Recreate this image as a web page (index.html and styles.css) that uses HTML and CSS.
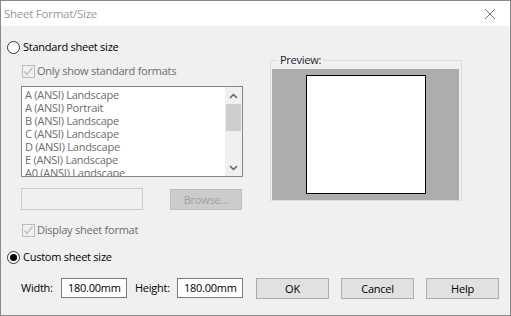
FILE: index.html
```html
<!DOCTYPE html>
<html lang="en">
<head>
    <meta charset="UTF-8">
    <title>Sheet Format/Size</title>
    <link rel="stylesheet" href="styles.css">
</head>
<body>
    <div class="dialog">
        <!-- title bar -->
        <div class="titlebar">
            <span class="title">Sheet Format/Size</span>
            <svg class="close" width="12" height="12" viewBox="0 0 12 12">
                <path d="M1 1 L11 11 M11 1 L1 11" stroke="#777" stroke-width="1" fill="none"/>
            </svg>
        </div>

        <div class="content">
            <div class="top">
                <!-- left column -->
                <div class="left">
                    <div class="row radio-row">
                        <span class="radio"></span>Standard sheet size
                    </div>
                    <div class="row check-row disabled">
                        <span class="check">
                            <svg width="11" height="11" viewBox="0 0 11 11"><path d="M1.5 5.5 L4 8.5 L9.5 1.5" stroke="#bcbcbc" stroke-width="1.3" fill="none"/></svg>
                        </span>Only show standard formats
                    </div>
                    <div class="listbox">
                        <ul class="items">
                            <li>A (ANSI) Landscape</li>
                            <li>A (ANSI) Portrait</li>
                            <li>B (ANSI) Landscape</li>
                            <li>C (ANSI) Landscape</li>
                            <li>D (ANSI) Landscape</li>
                            <li>E (ANSI) Landscape</li>
                            <li>A0 (ANSI) Landscape</li>
                        </ul>
                        <div class="scrollbar">
                            <svg class="arrow" width="9" height="6" viewBox="0 0 9 6"><path d="M1 5 L4.5 1.5 L8 5" stroke="#606060" stroke-width="1.5" fill="none"/></svg>
                            <div class="thumb"></div>
                            <div class="track"></div>
                            <svg class="arrow" width="9" height="6" viewBox="0 0 9 6"><path d="M1 1 L4.5 4.5 L8 1" stroke="#606060" stroke-width="1.5" fill="none"/></svg>
                        </div>
                    </div>
                    <div class="file-row">
                        <div class="field disabled-field"></div>
                        <div class="btn btn-disabled">Browse...</div>
                    </div>
                    <div class="row check-row disabled display-row">
                        <span class="check">
                            <svg width="11" height="11" viewBox="0 0 11 11"><path d="M1.5 5.5 L4 8.5 L9.5 1.5" stroke="#bcbcbc" stroke-width="1.3" fill="none"/></svg>
                        </span>Display sheet format
                    </div>
                    <div class="row radio-row custom-row">
                        <span class="radio checked"></span>Custom sheet size
                    </div>
                </div>

                <!-- preview -->
                <div class="right">
                    <fieldset class="preview">
                        <legend>Preview:</legend>
                        <div class="preview-area">
                            <div class="page"></div>
                        </div>
                    </fieldset>
                </div>
            </div>

            <!-- bottom row -->
            <div class="bottom">
                <span class="lbl">Width:</span>
                <div class="field size-field">180.00mm</div>
                <span class="lbl lbl-height">Height:</span>
                <div class="field size-field">180.00mm</div>
                <div class="buttons">
                    <div class="btn">OK</div>
                    <div class="btn">Cancel</div>
                    <div class="btn">Help</div>
                </div>
            </div>
        </div>
    </div>
</body>
</html>
```

FILE: styles.css
```css
/* reset */
* {
    box-sizing: border-box;
    margin: 0;
    padding: 0;
}
body {
    font-family: 'Open Sans', 'Noto Sans', sans-serif;
    font-size: 11px;
    letter-spacing: -0.25px;
    color: #000;
    background: #f0f0f0;
}
/* window frame */
.dialog {
    width: 511px;
    height: 316px;
    border: 1px solid #8a8a8a;
    background: #f0f0f0;
    overflow: hidden;
}
.titlebar {
    height: 25px;
    background: #fff;
    display: flex;
    align-items: center;
    justify-content: space-between;
    padding: 0 14px 0 3px;
}
.title {
    color: #999;
    font-size: 11.5px;
}
.close {
    display: block;
}
.content {
    padding: 0 0 0 6px;
}
.top {
    display: flex;
}
.left {
    width: 242px;
    padding-top: 14px;
}
.row {
    display: flex;
    align-items: center;
    height: 14px;
    line-height: 14px;
}
.radio {
    width: 13px;
    height: 13px;
    border: 1px solid #333;
    border-radius: 50%;
    background: #fff;
    margin-right: 3px;
    position: relative;
    flex: none;
}
.radio.checked::after {
    content: "";
    position: absolute;
    left: 2px;
    top: 2px;
    width: 7px;
    height: 7px;
    border-radius: 50%;
    background: #000;
}
.check-row {
    margin-top: 10px;
    padding-left: 15px;
}
.check {
    width: 13px;
    height: 13px;
    border: 1px solid #bcbcbc;
    margin-right: 2px;
    display: flex;
    align-items: center;
    justify-content: center;
    flex: none;
}
.disabled {
    color: #6d6d6d;
}
/* list */
.listbox {
    margin: 8px 0 0 14px;
    width: 222px;
    height: 91px;
    border: 1px solid #828790;
    background: #fff;
    display: flex;
    overflow: hidden;
}
.items {
    list-style: none;
    flex: 1;
    padding: 1px 0 0 3px;
    color: #6d6d6d;
    line-height: 13px;
}
.scrollbar {
    width: 17px;
    background: #f0f0f0;
    display: flex;
    flex-direction: column;
    align-items: center;
    padding: 0 1px;
}
.arrow {
    margin: 6px 0 5px;
    flex: none;
}
.thumb {
    width: 100%;
    height: 27px;
    background: #cdcdcd;
}
.track {
    flex: 1;
}
/* file row */
.file-row {
    display: flex;
    margin: 11px 0 0 14px;
    align-items: center;
}
.field {
    height: 22px;
    border: 1px solid #7a7a7a;
    background: #fff;
}
.disabled-field {
    width: 122px;
    border-color: #ccc;
    background: #f0f0f0;
}
.btn {
    height: 21px;
    border: 1px solid #adadad;
    background: #e1e1e1;
    display: flex;
    align-items: center;
    justify-content: center;
    width: 73px;
}
.btn-disabled {
    margin-left: 27px;
    width: 72px;
    border-color: #bfbfbf;
    background: #cccccc;
    color: #a0a0a0;
}
.display-row {
    margin-top: 13px;
}
.custom-row {
    margin-top: 13px;
}
/* preview */
.right {
    padding: 26px 0 0 21px;
}
.preview {
    width: 192px;
    border: 1px solid #dcdcdc;
    padding: 1px 2px 0 1px;
}
.preview legend {
    margin-left: 6px;
    padding: 0 2px;
    color: #1a1a30;
    line-height: 16px;
}
.preview-area {
    height: 131px;
    background: #adadad;
    display: flex;
    justify-content: center;
    align-items: flex-start;
    padding-top: 6px;
}
.page {
    width: 120px;
    height: 119px;
    border: 1px solid #000;
    background: #fff;
    margin-left: 1px;
}
/* bottom row */
.bottom {
    display: flex;
    align-items: center;
    margin-top: 12px;
    padding-left: 14px;
}
.lbl {
    width: 40px;
}
.lbl-height {
    margin-left: 8px;
    width: 42px;
}
.size-field {
    width: 66px;
    height: 20px;
    line-height: 18px;
    padding-left: 6px;
}
.buttons {
    display: flex;
    gap: 12px;
    margin-left: 13px;
    margin-top: 2px;
}
.buttons .btn:nth-child(2) {
    width: 73px;
}
```
